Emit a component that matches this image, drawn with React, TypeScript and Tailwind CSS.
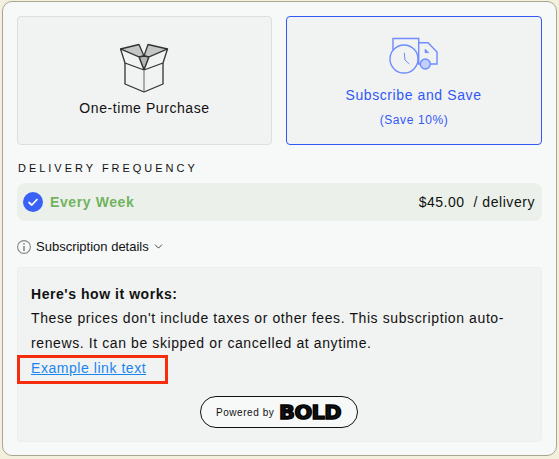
import { ChevronDown } from "lucide-react";

function BoxIcon() {
  return (
    <svg width="50" height="50" viewBox="0 0 50 50" fill="none" stroke="#333" strokeWidth="1.3" strokeLinejoin="round">
      <path d="M0.5 6 L19 1.5 L24 13 L19 14 Z" fill="#c4c6c6" />
      <path d="M47.5 6 L28 1.5 L24 13 L29 14 Z" fill="#c4c6c6" />
      <path d="M19 14 L24 13 L29 14 L24 27 Z" fill="#b4b6b6" />
      <path d="M0.5 6 L19 14 L24 27 L5 20 Z" fill="#f1f2f2" />
      <path d="M47.5 6 L29 14 L24 27 L43 20 Z" fill="#f1f2f2" />
      <path d="M5 20 V41 L24 49 L43 41 V20" />
      <path d="M24 27 V48" stroke="#999" strokeWidth="1.6" />
    </svg>
  );
}

function TruckIcon() {
  return (
    <svg width="50" height="38" viewBox="0 0 50 38" fill="none" stroke="#6e8cff" strokeWidth="1.4">
      <path d="M4 15 V1.5 H29.7 V27 H31" />
      <path d="M29.7 5.7 H39 L48 15 V27 H41" />
      <path d="M36 12 V15.7 H40 Z" fill="#6e8cff" strokeWidth="0.6" />
      <circle cx="15" cy="22" r="14" fill="#f1f2f2" />
      <path d="M15.3 15.7 L16 23 L20.3 27" strokeWidth="1" />
      <circle cx="36.3" cy="27" r="5" fill="#c3cffb" />
    </svg>
  );
}

export default function App() {
  return (
    <div className="w-[559px] h-[459px] bg-[#f3f0de] pt-px pl-[2px] font-['Liberation_Sans',Arial,sans-serif] text-[#111] overflow-hidden">
      <div className="w-[555px] h-[455px] bg-[#f7f9f9] border border-[#a9a793] rounded-[10px] pt-[14px] px-[14px]">
        <div className="flex gap-[14px]">
          <div className="w-[255px] h-[129px] bg-[#f1f2f2] border border-[#dddfdf] rounded flex flex-col items-center pt-[26px]">
            <BoxIcon />
            <span className="mt-[5px] text-[14px] tracking-[0.57px] leading-[20px]">One-time Purchase</span>
          </div>
          <div className="w-[256px] h-[129px] bg-[#f1f2f2] border border-[#3159f6] rounded flex flex-col items-center pt-[20px] text-[#3159f6]">
            <TruckIcon />
            <span className="mt-[10px] -ml-[1px] text-[14px] tracking-[0.6px] leading-[20px]">Subscribe and Save</span>
            <span className="mt-[6px] text-[12px] tracking-[0.6px] leading-[18px]">(Save 10%)</span>
          </div>
        </div>

        <div className="mt-[16px] ml-[1px] text-[11px] tracking-[2.98px] leading-[14px]">DELIVERY FREQUENCY</div>

        <div className="mt-[8px] w-[525px] h-[38px] bg-[#ebf1ea] rounded-lg flex items-center pl-[6px] pr-[7px]">
          <span className="w-[20px] h-[20px] rounded-full bg-[#3a61f6] flex items-center justify-center">
            <svg width="12" height="12" viewBox="0 0 12 12" fill="none" stroke="#fff" strokeWidth="1.7" strokeLinecap="round" strokeLinejoin="round">
              <path d="M2 6.5 L4.8 9 L10 3.5" />
            </svg>
          </span>
          <span className="ml-[7px] text-[14px] font-bold tracking-[0.6px] text-[#72b35f]">Every Week</span>
          <span className="ml-auto text-[14px] tracking-[0.5px]">$45.00</span>
          <span className="ml-[9px] text-[14px] tracking-[0.55px]">/ delivery</span>
        </div>

        <div className="mt-[16px] h-[18px] flex items-center text-[13px] pt-px">
          <svg width="14" height="14" viewBox="0 0 14 14" fill="none" stroke="#858686" strokeWidth="1.1">
            <circle cx="7" cy="7" r="6.4" />
            <path d="M7 6 V11" strokeWidth="1.6" />
            <path d="M7 3 V4.6" strokeWidth="1.6" />
          </svg>
          <span className="ml-[5px]">Subscription details</span>
          <ChevronDown className="ml-[3px] w-[13px] h-[13px]" strokeWidth={1.4} />
        </div>

        <div className="relative mt-[12px] w-[525px] h-[175px] bg-[#f1f2f2] border border-[#ecedec] rounded-sm pl-[13px] pt-[16px] text-[14px] tracking-[0.6px] leading-[25px]">
          <div className="font-bold tracking-[0.55px] leading-[20px]">Here's how it works:</div>
          <div className="mt-[2px] leading-[25px] whitespace-nowrap">These prices don't include taxes or other fees. This subscription auto-</div>
          <div className="whitespace-nowrap leading-[24px]">renews. It can be skipped or cancelled at anytime.</div>
          <div className="leading-[25px] mt-[1px] tracking-[0.55px] text-[#1a86f0] underline">Example link text</div>
          <div className="absolute left-[-1px] top-[87px] w-[151px] h-[29px] border-[3px] border-[#f52d0c]" />
          <div className="absolute left-[182px] top-[128px] w-[158px] h-[32px] border border-[#111] rounded-full bg-[#f7f9f9] flex items-center pl-[15px] text-[10px] tracking-[0.55px]">
            Powered by
            <span className="ml-[5px] text-[19px] leading-none font-black tracking-[-0.5px] font-['DejaVu_Sans',sans-serif] [-webkit-text-stroke:1.4px_black] scale-x-[1.1] origin-left">BOLD</span>
          </div>
        </div>
      </div>
    </div>
  );
}
